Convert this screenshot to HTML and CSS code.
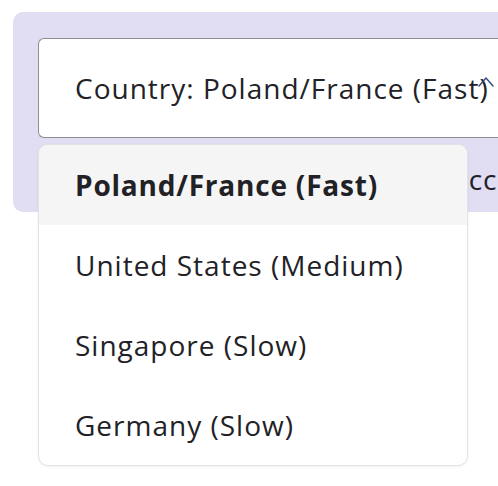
FILE: index.html
```html
<!DOCTYPE html>
<html lang="en">
<head>
<meta charset="utf-8">
<title>Country select</title>
<link rel="stylesheet" href="styles.css">
</head>
<body>
  <div class="page">
    <section class="panel">
      <div class="select">
        <span class="select-label">Country: Poland/France (Fast)</span>
        <svg class="chevron" width="18" height="14" viewBox="0 0 18 14" aria-hidden="true">
          <path d="M2 12 L9 4 L16 12" fill="none" stroke="#3a4778" stroke-width="1.4" stroke-linecap="round" stroke-linejoin="round"/>
        </svg>
      </div>
      <p class="hint">Account</p>
    </section>
    <ul class="menu">
      <li class="item active">Poland/France (Fast)</li>
      <li class="item">United States (Medium)</li>
      <li class="item">Singapore (Slow)</li>
      <li class="item">Germany (Slow)</li>
    </ul>
  </div>
</body>
</html>
```
FILE: styles.css
```css
html, body {
  margin: 0;
  padding: 0;
  background: #ffffff;
  overflow: hidden;
}
body {
  font-family: "Open Sans", "Noto Sans", sans-serif;
  color: #222226;
}
.page {
  position: relative;
  width: 498px;
  height: 486px;
  padding-top: 12px;
  padding-left: 13px;
  box-sizing: border-box;
  overflow: hidden;
}
.panel {
  width: 560px;
  height: 200px;
  box-sizing: border-box;
  background: #e1def3;
  border-radius: 10px 0 0 10px;
  padding: 26px 0 0 25px;
}
.select {
  position: relative;
  height: 100px;
  box-sizing: border-box;
  background: #ffffff;
  border: 1.5px solid #8e8e92;
  border-right: none;
  border-radius: 6px 0 0 6px;
  display: flex;
  align-items: center;
  padding-left: 36px;
  font-size: 28px;
  letter-spacing: 1px;
  white-space: nowrap;
}
.select-label {
  line-height: 1;
}
.chevron {
  position: absolute;
  left: 438px;
  top: 35px;
}
.hint {
  margin: 26px 0 0 412px;
  font-size: 28px;
  letter-spacing: 1px;
  line-height: 30px;
  white-space: nowrap;
}
.menu {
  position: absolute;
  left: 38px;
  top: 144px;
  width: 430px;
  height: 322px;
  box-sizing: border-box;
  margin: 0;
  padding: 0;
  list-style: none;
  background: #ffffff;
  border: 1px solid #e3e3e6;
  border-radius: 10px;
  box-shadow: 0 1px 3px rgba(0, 0, 0, 0.06);
  overflow: hidden;
}
.item {
  height: 80px;
  display: flex;
  align-items: center;
  padding-left: 36px;
  font-size: 28px;
  letter-spacing: 1px;
  white-space: nowrap;
}
.item.active {
  background: #f5f5f5;
  font-weight: 700;
  letter-spacing: 0.8px;
}
```
